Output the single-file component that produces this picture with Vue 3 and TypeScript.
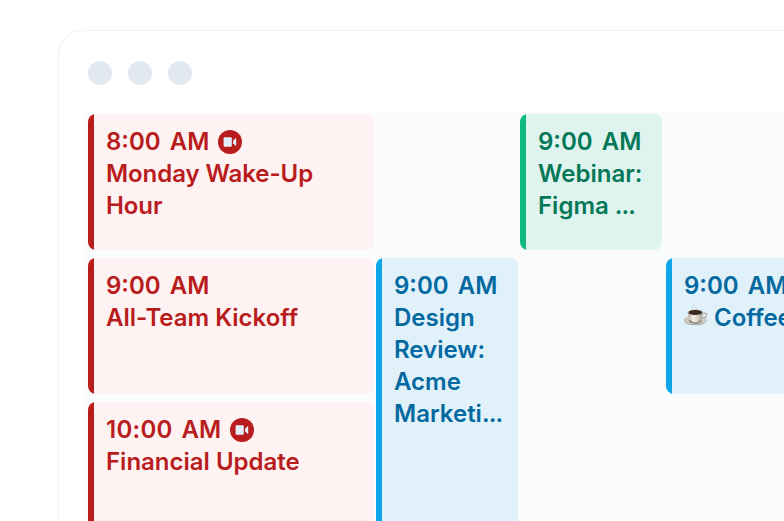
<script setup lang="ts">
interface CalendarEvent {
  slot: string
  tone: 'red' | 'blue' | 'green'
  hour: string
  lines: string[]
  clipped?: boolean
  video?: boolean
  coffee?: boolean
}

const events: CalendarEvent[] = [
  { slot: 'wake', tone: 'red', hour: '8:00', lines: ['Monday Wake-Up', 'Hour'], video: true },
  { slot: 'kickoff', tone: 'red', hour: '9:00', lines: ['All-Team Kickoff'] },
  { slot: 'finance', tone: 'red', hour: '10:00', lines: ['Financial Update'], video: true },
  { slot: 'design', tone: 'blue', hour: '9:00', lines: ['Design', 'Review:', 'Acme', 'Marketi'], clipped: true },
  { slot: 'webinar', tone: 'green', hour: '9:00', lines: ['Webinar:', 'Figma '], clipped: true },
  { slot: 'coffee', tone: 'blue', hour: '9:00', lines: ['Coffee'], coffee: true },
]
</script>

<template>
  <div class="stage">
    <main class="window">
      <header class="controls"><i v-for="n in 3" :key="n" class="dot" /></header>
      <section class="calendar">
        <article v-for="event in events" :key="event.slot" class="event" :class="[event.tone, event.slot]">
          <div class="time">
            <span class="hour">{{ event.hour }}</span><span>AM</span>
            <svg v-if="event.video" class="video" viewBox="0 0 24 24">
              <circle cx="12" cy="12" r="12" fill="#b91c1c" />
              <rect x="5.6" y="7.2" width="8.2" height="9.6" rx="1" fill="#e0effa" />
              <path d="M15.1 10.7 L17.2 8.5 Q18.2 7.9 18.2 8.9 V15.1 Q18.2 16.1 17.2 15.5 L15.1 13.3Z" fill="#e0effa" />
            </svg>
          </div>
          <div v-for="(line, index) in event.lines" :key="line" class="line">
            <svg v-if="event.coffee" class="cup" viewBox="0 0 24 24">
              <defs>
                <linearGradient id="china" x1="0" x2="1">
                  <stop offset="0" stop-color="#a9a49b" />
                  <stop offset=".35" stop-color="#f3f0e9" />
                  <stop offset=".7" stop-color="#d3cec4" />
                  <stop offset="1" stop-color="#99938a" />
                </linearGradient>
              </defs>
              <path d="M9 4 Q7 2.7 9 1.4 Q10.5 .4 9.5 -.8 M11.5 4 Q13.4 2.5 11.6 1" fill="none" stroke="#c5cdd0" stroke-width=".9" />
              <ellipse cx="11.3" cy="14.5" rx="11.3" ry="4.8" fill="#aaa69f" />
              <ellipse cx="11.3" cy="13.8" rx="11.1" ry="4.4" fill="#cfccc4" />
              <ellipse cx="11.3" cy="15.2" rx="6.5" ry="2.7" fill="#969087" />
              <path d="M18 7.4 C24.8 5.4 24 12.2 16.5 12.3" fill="none" stroke="#b5b0a7" stroke-width="1.5" />
              <path d="M3.7 6.2 C4 11 6 16.2 11.4 16.2 S18.8 11 19 6.2Z" fill="url(#china)" />
              <ellipse cx="11.35" cy="6.3" rx="7.7" ry="3" fill="#cbc5ba" />
              <ellipse cx="11.35" cy="6.5" rx="6.9" ry="2.5" fill="#3b2a22" />
            </svg>
            <span>{{ line }}<span v-if="event.clipped && index === event.lines.length - 1" class="ellipsis">...</span></span>
          </div>
        </article>
      </section>
    </main>
  </div>
</template>

<style>
body {
  margin: 0;
  overflow: hidden;
  background: #fff;
}
</style>

<style scoped>
.stage {
  box-sizing: border-box;
  width: 784px;
  height: 521px;
  padding: 30px 0 0 58px;
  overflow: hidden;
  font-family: Inter, sans-serif;
}

.window {
  box-sizing: border-box;
  width: 900px;
  height: 600px;
  padding: 30px 0 0 25px;
  border: 1px solid #f3f4f5;
  border-radius: 25px;
  background: #fff;
  box-shadow: 0 2px 4px rgb(15 23 42 / 5%);
}

.controls {
  display: flex;
  gap: 16px;
  height: 24px;
  margin: 0 0 27px 4px;
}

.dot {
  width: 24px;
  height: 24px;
  border-radius: 50%;
  background: #e2e8f0;
}

.calendar {
  display: grid;
  grid-template-columns: 286px 2px 142px 2px 142px 4px 142px;
  grid-template-rows: repeat(3, 136px);
  row-gap: 8px;
  padding: 2px 0 0 4px;
  background: #f9fbfd;
}

.event {
  box-sizing: border-box;
  padding: 12px 0 0 18px;
  border-radius: 8px;
  overflow: hidden;
  font-size: 24px;
  font-weight: 600;
  line-height: 32px;
  white-space: pre;
}

.red { color: #b91c1c; background: linear-gradient(90deg, #b91c1c 6px, #fef2f2 6px); }
.blue { color: #0369a1; background: linear-gradient(90deg, #0ea5e9 6px, #e0f1fa 6px); }
.green { color: #047857; background: linear-gradient(90deg, #10b981 6px, #e0f4ef 6px); }

.wake { grid-area: 1 / 1; }
.kickoff { grid-area: 2 / 1; }
.finance { grid-area: 3 / 1; }
.design { grid-area: 2 / 3 / 4 / 4; }
.webinar { grid-area: 1 / 5; }
.coffee { grid-area: 2 / 7; }

.time, .line {
  display: flex;
  align-items: center;
  height: 32px;
}

.wake .line { letter-spacing: -0.07px; }
.finance .hour { letter-spacing: 0.25px; }
.ellipsis { letter-spacing: -0.9px; }
.time { gap: 9px; }
.video { width: 24px; height: 24px; }
.cup { width: 24px; height: 24px; margin-right: 6px; flex: none; overflow: visible; }
</style>
